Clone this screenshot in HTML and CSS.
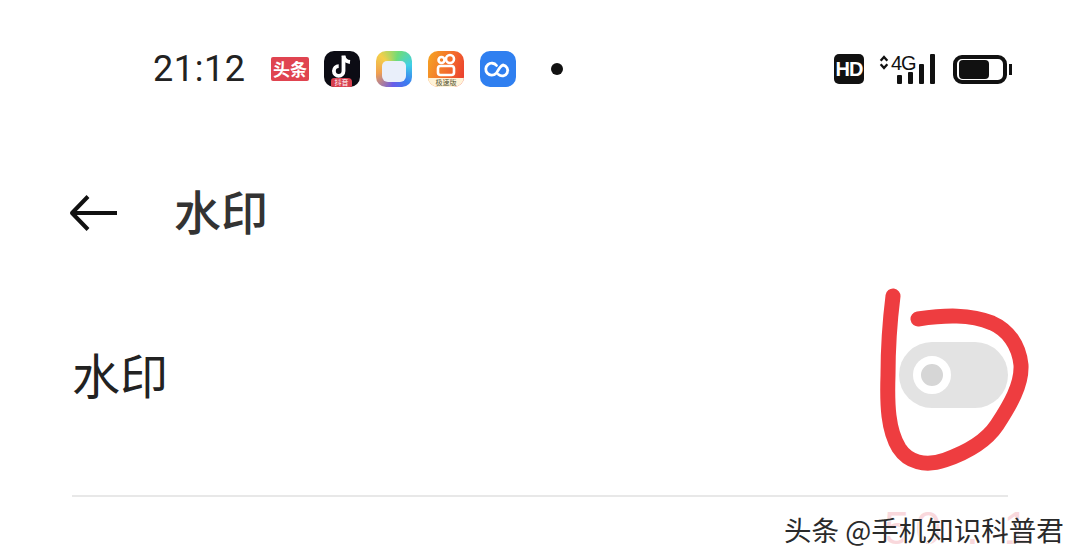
FILE: index.html
```html
<!DOCTYPE html>
<html lang="zh">
<head>
    <meta charset="utf-8">
    <title>水印</title>
    <link rel="stylesheet" href="styles.css">
</head>
<body>
    <div class="status-bar">
        <span class="time">21:12</span>
        <div class="apps">
            <span class="app-toutiao">头条</span>
            <span class="app app-tiktok">
                <svg viewBox="0 0 36 36" width="36" height="36">
                    <path d="M19.5 4.500v15.500a4.800 4.800 0 1 1-4.800-4.800" fill="none" stroke="#fff" stroke-width="3.800"/>
                    <path d="M19.5 5c.6 3.600 3 5.600 6.500 6" fill="none" stroke="#fff" stroke-width="3.800"/>
                </svg>
                <span class="app-tag tag-red">抖音</span>
            </span>
            <span class="app app-gallery"><span class="gallery-card"></span></span>
            <span class="app app-kuai">
                <svg viewBox="0 0 36 36" width="36" height="36">
                    <circle cx="22" cy="8" r="4" fill="none" stroke="#fff" stroke-width="2.600"/>
                    <circle cx="13.500" cy="9" r="3" fill="none" stroke="#fff" stroke-width="2.600"/>
                    <rect x="10" y="15" width="16" height="9" rx="2.500" fill="none" stroke="#fff" stroke-width="2.600"/>
                </svg>
                <span class="app-tag tag-white">极速版</span>
            </span>
            <span class="app app-blue">
                <svg viewBox="0 0 36 36" width="36" height="36">
                    <path d="M17.500 14.500a6 6 0 1 0-.5 8c2-2 3-7 7-8.500a5.500 5.500 0 1 1-4.500 9.500" transform="translate(-1 0)" fill="none" stroke="#fff" stroke-width="2.800" stroke-linecap="round"/>
                </svg>
            </span>
            <span class="dot"></span>
        </div>
        <div class="indicators">
            <span class="hd">HD</span>
            <span class="signal">
                <svg class="updown" viewBox="0 0 10 18" width="10" height="15">
                    <path d="M1 7l4-4.500 4 4.500M1 11l4 4.500 4-4.500" fill="none" stroke="#111" stroke-width="2.800"/>
                </svg>
                <span class="net">4G</span>
                <span class="bars">
                    <i class="bar bar-1"></i><i class="bar bar-2"></i><i class="bar bar-3"></i><i class="bar bar-4"></i>
                </span>
            </span>
            <span class="battery"><span class="battery-fill"></span></span>
            <span class="battery-cap"></span>
        </div>
    </div>

    <div class="header">
        <svg class="back" viewBox="0 0 50 40" width="50" height="40">
            <path d="M48 20H3M19 3.500L3 20l16 16.500" fill="none" stroke="#111" stroke-width="4" stroke-linejoin="round"/>
        </svg>
        <h1 class="title">水印</h1>
    </div>

    <div class="row">
        <span class="row-label">水印</span>
        <span class="toggle"><span class="knob"></span></span>
    </div>
    <div class="divider"></div>

    <svg class="scribble" viewBox="0 0 1080 559" width="1080" height="559">
        <path d="M893 296C890 320 888 345 888 375C887 405 888 430 899 448C908 462 925 467 945 460C965 453 985 443 997 425C1010 405 1022 385 1021 365C1019 345 1008 330 992 323C970 314 945 315 918 319" fill="none" stroke="#ee3d40" stroke-width="15" stroke-linecap="round"/>
    </svg>

    <div class="stamp-back">50 . 1</div>
    <div class="stamp">头条 @手机知识科普君</div>
</body>
</html>
```

FILE: styles.css
```css
* {
    box-sizing: border-box;
}

body {
    margin: 0;
    width: 1080px;
    height: 559px;
    overflow: hidden;
    position: relative;
    background-color: #fff;
    color: #222;
    font-family: "Noto Sans CJK SC", "Noto Sans", sans-serif;
}

/* status bar */
.status-bar {
    display: flex;
    align-items: center;
    height: 138px;
    padding-left: 153px;
}

.time {
    font-family: Roboto, sans-serif;
    font-size: 36px;
    letter-spacing: 0.6px;
    color: #222;
    width: 118px;
}

.apps {
    display: flex;
    align-items: center;
    gap: 16px;
    width: 563px;
}

.app-toutiao {
    width: 38px;
    height: 24px;
    margin-right: -1px;
    border-radius: 2px;
    background-color: #e04450;
    color: #fff;
    font-size: 17px;
    font-weight: 700;
    line-height: 24px;
    text-align: center;
    white-space: nowrap;
}

.app {
    position: relative;
    width: 36px;
    height: 36px;
    border-radius: 10px;
    overflow: hidden;
    display: block;
}

.app svg {
    display: block;
}

.app-tag {
    position: absolute;
    left: 0;
    right: 0;
    bottom: 0;
    height: 9px;
    font-size: 7px;
    line-height: 9px;
    text-align: center;
}

.tag-red {
    right: 8px;
    left: 7px;
    background-color: #d8404f;
    border-radius: 3px 4px 0 0;
    color: #fff;
}

.tag-white {
    background-color: #fff3d8;
    color: #553;
}

.app-tiktok {
    background-color: #0c0c14;
}

.app-gallery {
    background: conic-gradient(from 315deg, #f4cf4a 0deg, #6fdc78 60deg, #3fd0e6 120deg, #3a7df0 180deg, #6a5ce8 230deg, #f0a050 300deg, #f4cf4a 360deg);
    display: flex;
    align-items: center;
    justify-content: center;
}

.gallery-card {
    width: 24px;
    height: 21px;
    margin-top: 4px;
    border-radius: 5px 5px 6px 6px;
    background-color: #e9effa;
}

.app-kuai {
    background: linear-gradient(110deg, #f5a623 0%, #f36b2c 55%, #e8362f 100%);
}

.app-blue {
    background-color: #2f7ff0;
}

.dot {
    width: 12px;
    height: 12px;
    border-radius: 50%;
    background-color: #111;
    margin-left: 19px;
}

.indicators {
    display: flex;
    align-items: center;
}

.hd {
    width: 30px;
    height: 30px;
    border-radius: 5px;
    background-color: #111;
    color: #fff;
    font-family: "Liberation Sans", sans-serif;
    font-size: 20px;
    font-weight: 700;
    line-height: 30px;
    text-align: center;
    letter-spacing: -1px;
}

.signal {
    position: relative;
    display: block;
    width: 58px;
    height: 30px;
    margin-left: 14px;
}

.updown {
    position: absolute;
    left: 1px;
    top: 1px;
}

.net {
    position: absolute;
    left: 13px;
    top: -2px;
    font-family: "Liberation Sans", sans-serif;
    font-size: 20px;
    line-height: 22px;
    letter-spacing: -1px;
    color: #111;
}

.bars {
    position: absolute;
    left: 19px;
    bottom: 0;
    display: flex;
    align-items: flex-end;
    gap: 6px;
}

.bar {
    display: block;
    width: 5px;
    border-radius: 1px;
    background-color: #111;
}

.bar-1 { height: 9px; }
.bar-2 { height: 12px; }
.bar-3 { height: 20px; }
.bar-4 { height: 30px; }

.battery {
    display: block;
    width: 54px;
    height: 29px;
    margin-left: 17px;
    padding: 1px 2px;
    border: 4px solid #111;
    border-radius: 9px;
}

.battery-fill {
    display: block;
    width: 30px;
    height: 100%;
    border-radius: 4px;
    background-color: #111;
}

.battery-cap {
    width: 3px;
    height: 11px;
    margin-left: 2px;
    background-color: #111;
}

/* header */
.header {
    display: flex;
    align-items: center;
    height: 150px;
    padding-left: 69px;
}

.back {
    display: block;
    margin-right: 55px;
}

.title {
    margin: 0 0 8px;
    font-size: 47px;
    font-weight: 500;
    line-height: 1;
    color: #333;
}

/* setting row */
.row {
    display: flex;
    align-items: center;
    justify-content: space-between;
    height: 207px;
    margin: 0 72px;
    padding-bottom: 33px;
}

.row-label {
    margin-bottom: 4px;
    font-size: 48px;
    line-height: 1;
    color: #222;
}

.toggle {
    display: flex;
    align-items: center;
    width: 109px;
    height: 66px;
    padding-left: 14px;
    border-radius: 33px;
    background-color: #e3e3e3;
}

.knob {
    width: 38px;
    height: 38px;
    border: 8px solid #fff;
    border-radius: 50%;
    background-color: #d6d6d6;
}

.divider {
    height: 2px;
    margin: 0 72px;
    background-color: #e8e8e8;
}

/* overlays on top of the screenshot */
.scribble {
    position: absolute;
    left: 0;
    top: 0;
    pointer-events: none;
}

.stamp-back {
    position: absolute;
    left: 884px;
    top: 501px;
    font-family: "Liberation Sans", sans-serif;
    font-size: 46px;
    letter-spacing: 6px;
    color: #f9d8dc;
}

.stamp {
    position: absolute;
    left: 784px;
    top: 510px;
    font-size: 27.500px;
    line-height: 38px;
    color: #2a2a2a;
    text-shadow: 1px 1px 0 #fff, -1px 0 0 #fff;
    white-space: nowrap;
}
```
